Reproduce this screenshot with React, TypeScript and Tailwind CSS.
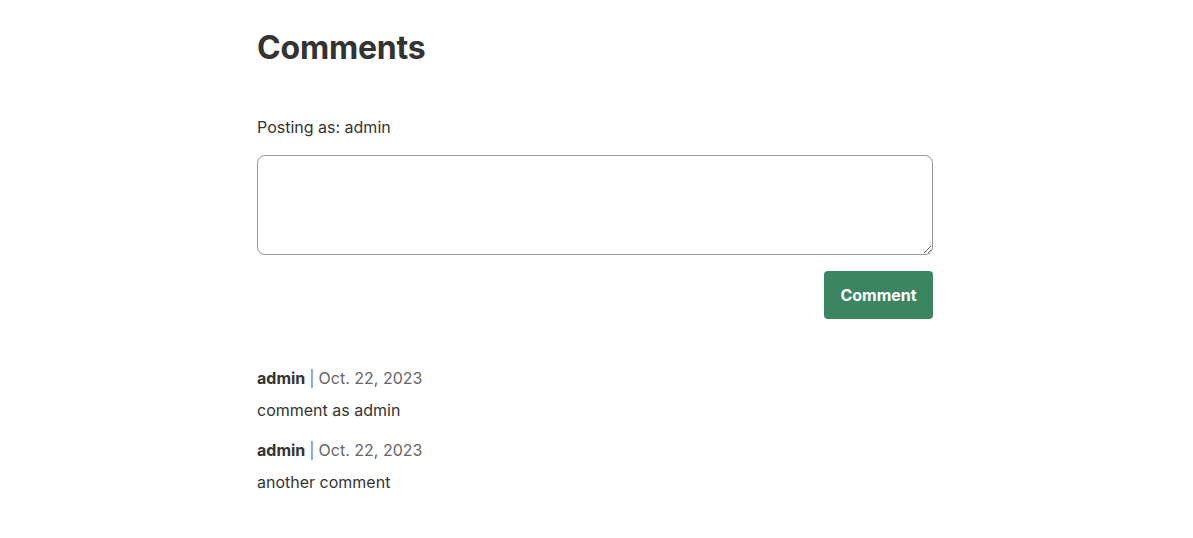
import React from 'react';

const comments = [
  { author: 'admin', date: 'Oct. 22, 2023', body: 'comment as admin' },
  { author: 'admin', date: 'Oct. 22, 2023', body: 'another comment' },
];

export default function App() {
  return (
    <div className="min-h-[538px] bg-white font-['Inter',sans-serif] text-[#333]">
      <div className="w-[676px] ml-[257px] pt-[26px]">
        <h2 className="text-[32px] leading-[44px] font-bold tracking-[-0.2px]">Comments</h2>

        <form className="mt-[45px]" onSubmit={(e) => e.preventDefault()}>
          <p className="text-[16px] leading-[24px]">Posting as: admin</p>
          <textarea className="mt-[16px] block w-full h-[100px] rounded-[8px] border border-[#999] p-2 text-[16px] outline-none" />
          <div className="flex justify-end mt-[16px]">
            <button
              type="submit"
              className="h-[48px] w-[109px] rounded-[4px] bg-[#3b8661] text-white text-[16px] font-bold"
            >
              Comment
            </button>
          </div>
        </form>

        <div className="mt-[47px] flex flex-col gap-[16px]">
          {comments.map((c, i) => (
            <div key={i}>
              <div className="text-[16px] leading-[24px]">
                <span className="font-bold">{c.author}</span>
                <span className="text-[#777] mx-[4px]">|</span>
                <span className="text-[#666]">{c.date}</span>
              </div>
              <p className="mt-[8px] text-[16px] leading-[24px]">{c.body}</p>
            </div>
          ))}
        </div>
      </div>
    </div>
  );
}
